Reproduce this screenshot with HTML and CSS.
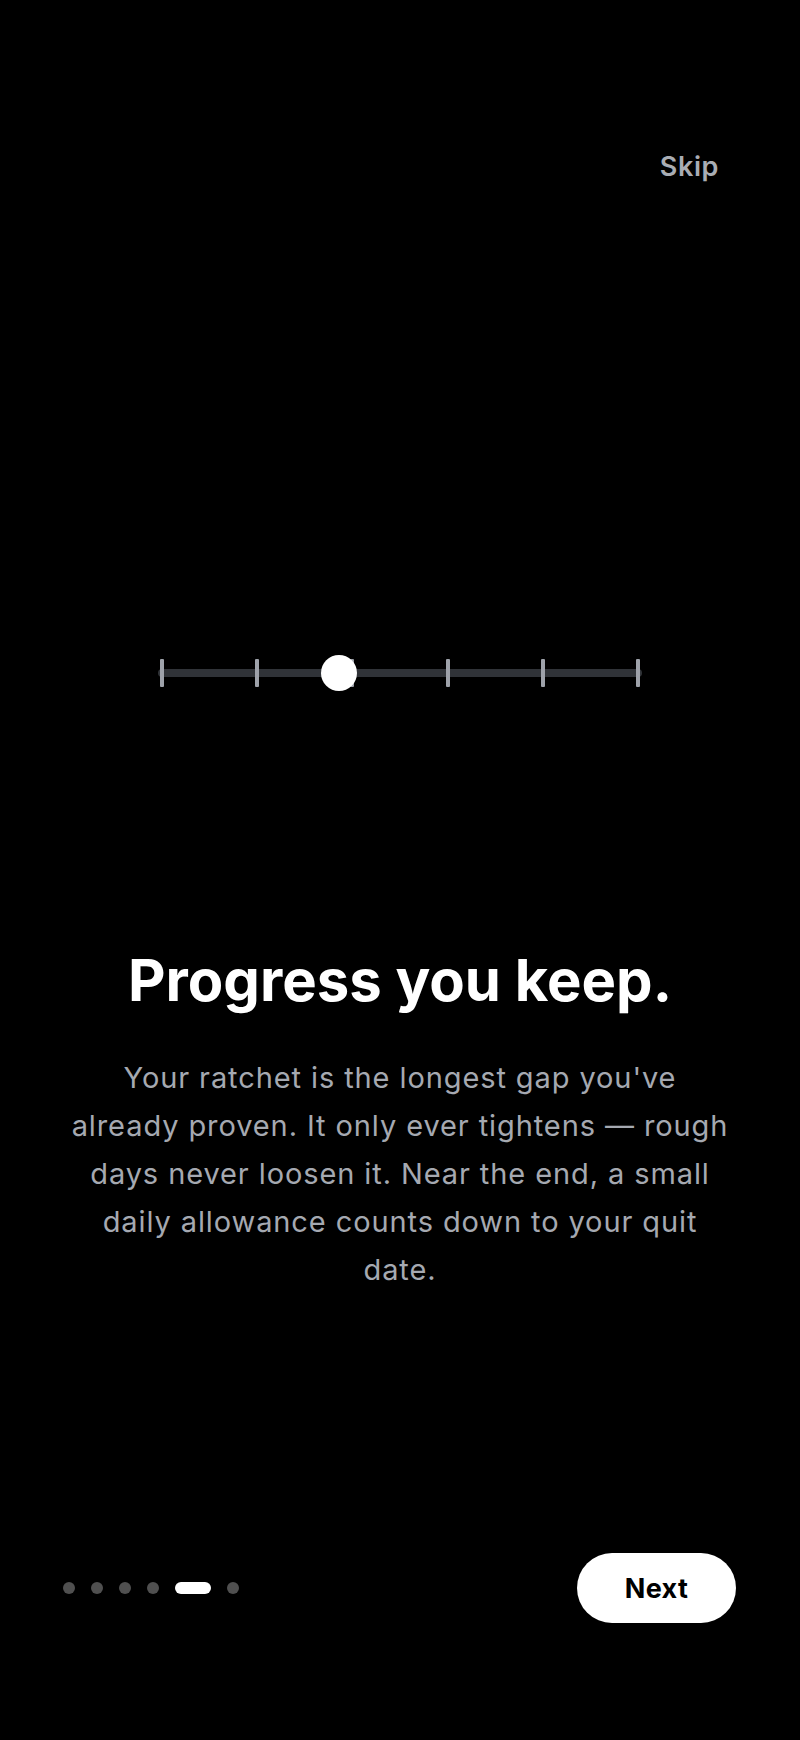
FILE: index.html
```html
<!DOCTYPE html>
<html lang="en">
<head>
<meta charset="utf-8">
<title>Progress you keep</title>
<link rel="stylesheet" href="styles.css">
</head>
<body>
<div class="screen">
  <header class="topbar">
    <button class="skip" type="button">Skip</button>
  </header>
  <main class="content">
    <div class="slider" aria-hidden="true">
      <div class="track"></div>
      <span class="tick t0"></span>
      <span class="tick t1"></span>
      <span class="tick t2"></span>
      <span class="tick t3"></span>
      <span class="tick t4"></span>
      <span class="tick t5"></span>
      <span class="knob"></span>
    </div>
    <h1 class="title">Progress you keep.</h1>
    <p class="body">Your ratchet is the longest gap you've<br>already proven. It only ever tightens — rough<br>days never loosen it. Near the end, a small<br>daily allowance counts down to your quit<br>date.</p>
  </main>
  <footer class="footer">
    <div class="dots">
      <span class="dot"></span>
      <span class="dot"></span>
      <span class="dot"></span>
      <span class="dot"></span>
      <span class="dot active"></span>
      <span class="dot"></span>
    </div>
    <button class="next" type="button">Next</button>
  </footer>
</div>
</body>
</html>
```

FILE: styles.css
```css
* { box-sizing: border-box; }
html, body { margin: 0; padding: 0; background: #000; }
body { font-family: Inter, "Noto Sans", "Liberation Sans", sans-serif; color: #fff; }

.screen {
  width: 800px;
  height: 1740px;
  display: flex;
  flex-direction: column;
  background: #000;
}

.topbar {
  display: flex;
  justify-content: flex-end;
  padding: 151px 81px 0 0;
}
.skip {
  font-family: inherit;
  font-size: 27px;
  line-height: 32px;
  font-weight: 600;
  letter-spacing: 0.6px;
  color: #a9adb4;
  background: none;
  border: 0;
  padding: 0;
}

.content {
  display: flex;
  flex-direction: column;
  align-items: center;
}

.slider {
  position: relative;
  width: 484px;
  height: 36px;
  margin-top: 472px;
}
.track {
  position: absolute;
  left: 0;
  right: 0;
  top: 14px;
  height: 8px;
  border-radius: 4px;
  background: #303338;
}
.tick {
  position: absolute;
  top: 4px;
  width: 4px;
  height: 28px;
  border-radius: 1px;
  background: #9ea2aa;
}
.t0 { left: 2px; }
.t1 { left: 97px; }
.t2 { left: 192px; }
.t3 { left: 288px; }
.t4 { left: 383px; }
.t5 { left: 478px; }
.knob {
  position: absolute;
  left: 163px;
  top: 0;
  width: 36px;
  height: 36px;
  border-radius: 50%;
  background: #fff;
}

.title {
  margin: 254px 0 0;
  font-size: 58px;
  line-height: 70px;
  font-weight: 700;
  letter-spacing: 0;
  color: #fff;
  text-align: center;
}

.body {
  margin: 39px 0 0;
  font-size: 29px;
  line-height: 48px;
  font-weight: 400;
  letter-spacing: 0.9px;
  color: #a5a9b1;
  text-align: center;
}

.footer {
  margin-top: auto;
  display: flex;
  align-items: center;
  justify-content: space-between;
  padding: 0 64px 117px 63px;
}
.dots {
  display: flex;
  align-items: center;
  gap: 16px;
}
.dot {
  width: 12px;
  height: 12px;
  border-radius: 6px;
  background: #505050;
}
.dot.active {
  width: 36px;
  background: #fff;
}
.next {
  width: 159px;
  height: 70px;
  border: 0;
  border-radius: 35px;
  background: #fff;
  color: #000;
  font-family: inherit;
  font-size: 27px;
  font-weight: 700;
  letter-spacing: 0.3px;
}
```
